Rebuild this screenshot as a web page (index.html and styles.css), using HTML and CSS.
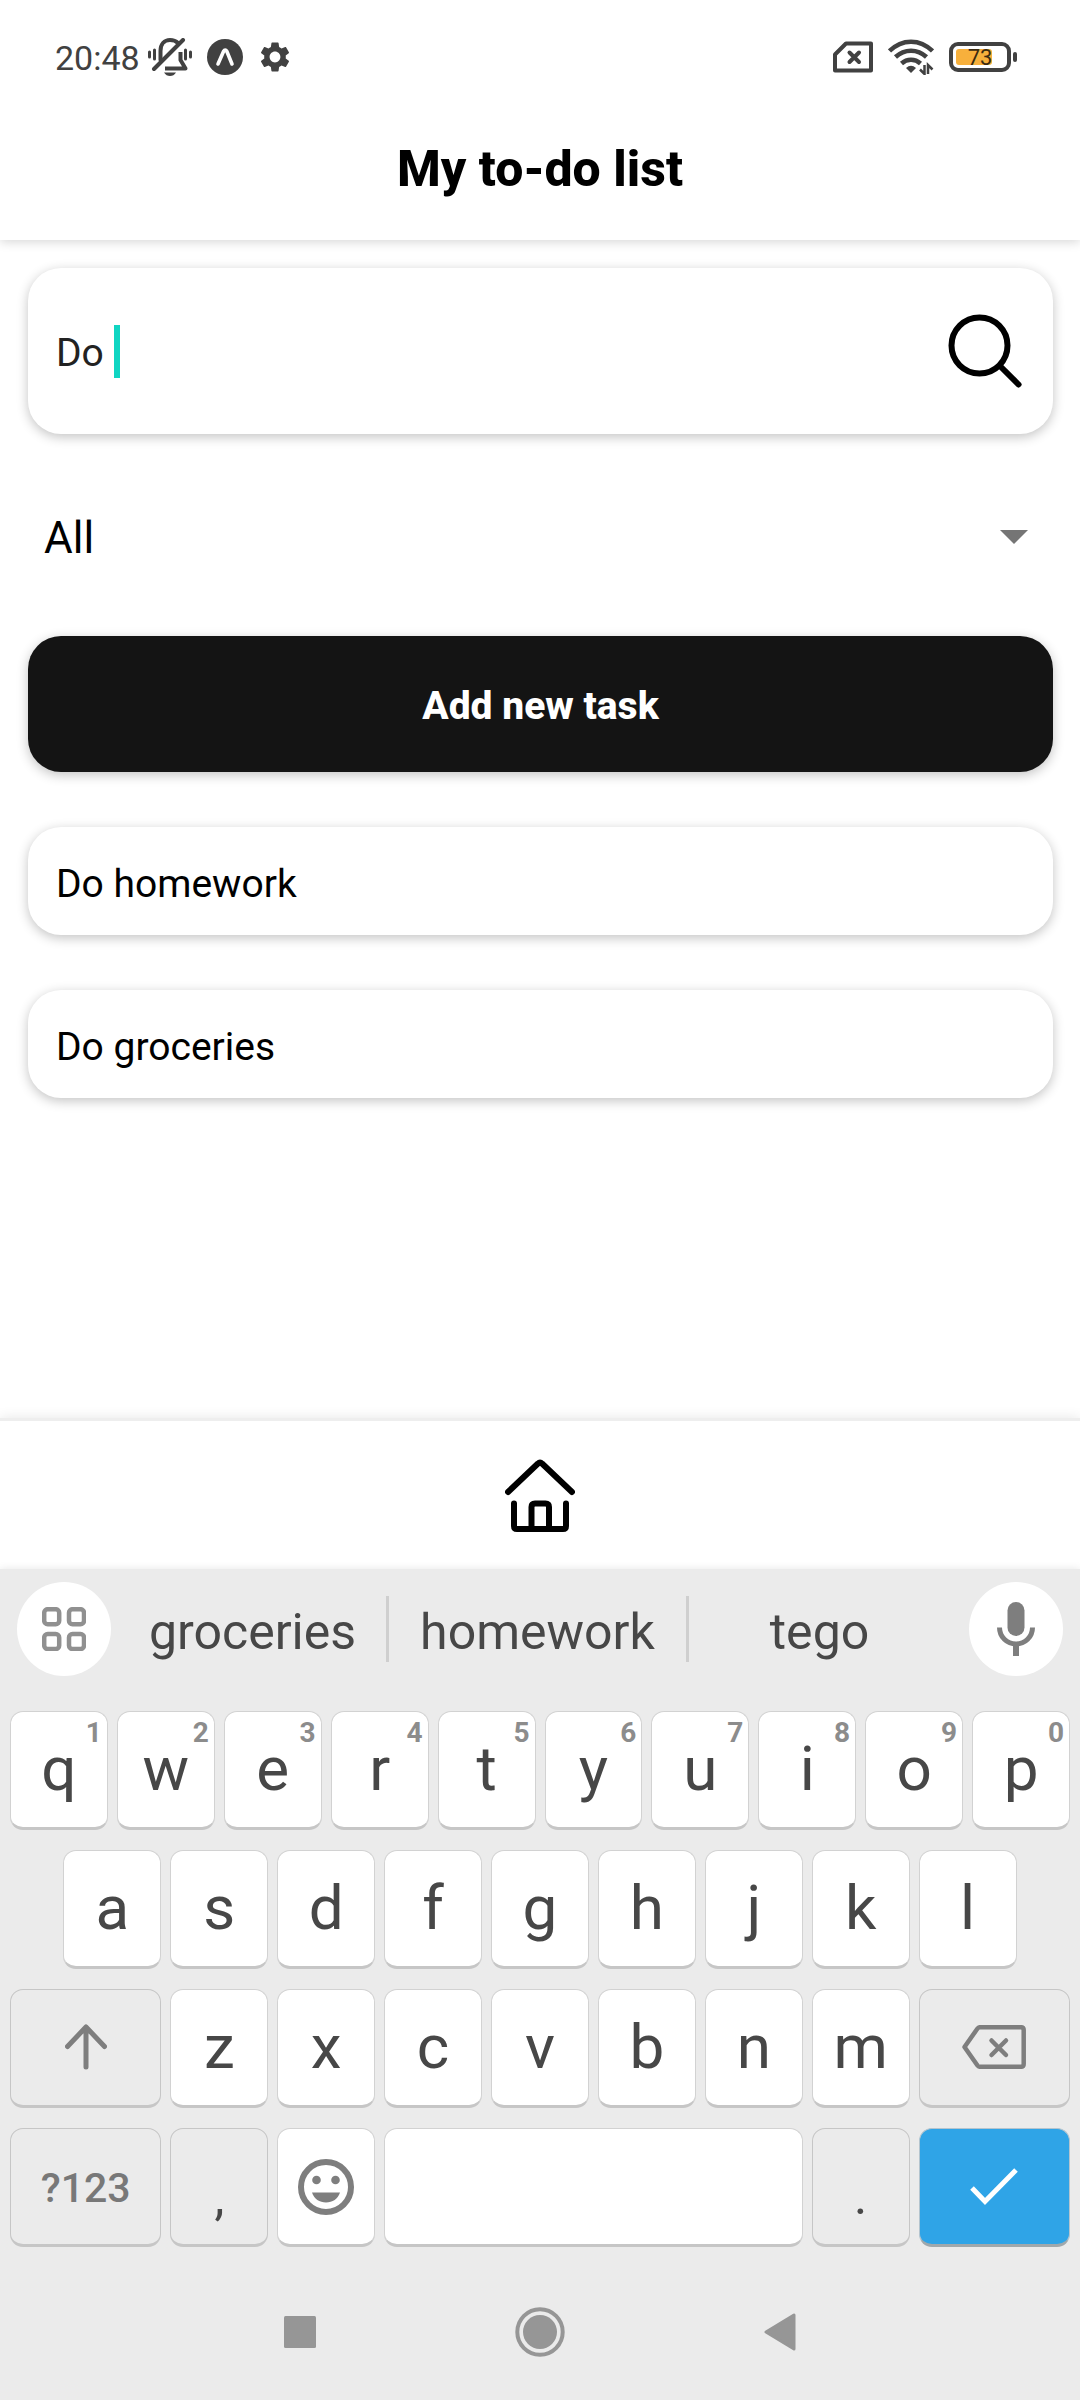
FILE: index.html
```html
<!DOCTYPE html>
<html lang="en">
<head>
<meta charset="utf-8">
<meta name="viewport" content="width=device-width, initial-scale=1">
<title>My to-do list</title>
<link rel="stylesheet" href="styles.css">
</head>
<body>
<header class="app-header">
  <div class="status-bar">
    <div class="status-group">
      <span class="clock">20:48</span>
      <svg class="icon-bell" width="44" height="38" viewBox="0 0 44 38" fill="none" stroke="#414141" stroke-width="4" stroke-linecap="round" aria-hidden="true">
        <path d="M12.500 22V13C12.500 6 16.500 2 22 2C25.500 2 28 3 30 5"/>
        <path d="M6 31L35 2"/>
        <path d="M17 30.500H37.500L32.500 22V14" stroke-linejoin="round" stroke-linecap="butt"/>
        <path d="M16 34.500H28C26.500 37 24.500 38 22 38S17.500 37 16 34.500Z" fill="#414141" stroke="none"/>
        <path d="M1.500 14V19M6.500 12V21M37.500 12V21M42.500 14V19" stroke-width="3"/>
      </svg>
      <svg class="icon-expo" width="36" height="36" viewBox="0 0 36 36" aria-hidden="true">
        <circle cx="18" cy="18" r="18" fill="#414141"/>
        <path d="M11 25L16.500 12.500Q18.200 9.500 19.900 12.500L25 25" fill="none" stroke="#fff" stroke-width="3.600" stroke-linecap="round" stroke-linejoin="round"/>
      </svg>
      <svg class="icon-gear" width="36" height="36" viewBox="0 0 24 24" fill="#414141" aria-hidden="true">
        <path d="M19.140 12.940c.04-.3.06-.61.06-.94 0-.32-.02-.64-.07-.94l2.030-1.580c.18-.14.23-.41.12-.61l-1.920-3.320c-.12-.22-.37-.29-.59-.22l-2.390.96c-.5-.38-1.030-.7-1.620-.94l-.36-2.540c-.04-.24-.24-.41-.48-.41h-3.840c-.24 0-.43.17-.47.41l-.36 2.540c-.59.24-1.130.57-1.620.94l-2.390-.96c-.22-.08-.47 0-.59.22L2.740 8.870c-.12.21-.08.47.12.61l2.030 1.580c-.05.3-.09.63-.09.94s.02.64.07.94l-2.030 1.580c-.18.14-.23.41-.12.61l1.920 3.320c.12.22.37.29.59.22l2.390-.96c.5.38 1.030.7 1.620.94l.36 2.540c.05.24.24.41.48.41h3.840c.24 0 .44-.17.47-.41l.36-2.540c.59-.24 1.130-.56 1.620-.94l2.390.96c.22.08.47 0 .59-.22l1.920-3.320c.12-.22.07-.47-.12-.61l-2.010-1.580zM12 15.600c-1.980 0-3.600-1.620-3.600-3.600s1.620-3.600 3.600-3.600 3.600 1.620 3.600 3.600-1.620 3.600-3.600 3.600z"/>
      </svg>
    </div>
    <div class="status-group">
      <svg width="40" height="32" viewBox="0 0 40 32" fill="none" stroke="#414141" stroke-width="4" stroke-linejoin="round" stroke-linecap="round" aria-hidden="true">
        <path d="M13 2.500H38V29.500H2V13.500Z"/>
        <path d="M16.500 11.500L26 21M26 11.500L16.500 21"/>
      </svg>
      <svg class="icon-wifi" width="46" height="36" viewBox="0 0 46 36" fill="none" stroke="#414141" stroke-width="4.500" aria-hidden="true">
        <path d="M1.500 12C14 -.5 32 -.5 44.500 12"/>
        <path d="M7.500 18C16.500 9.500 29.500 9.500 38.500 18"/>
        <path d="M13.500 24.500C19 19.500 27 19.500 32.500 24.500"/>
        <path d="M23 34L18 29Q23 24.500 28 29Z" fill="#414141" stroke="none"/>
        <path d="M36.500 26V35L32 30.500M40 35V26L44.500 30.500" stroke-width="2.500"/>
      </svg>
      <div class="battery">
        <div class="battery-body"><div class="battery-fill"></div><span class="battery-text">73</span></div>
        <div class="battery-tip"></div>
      </div>
    </div>
  </div>
  <h1 class="title">My to-do list</h1>
</header>

<main class="content">
  <div class="search">
    <label class="search-field">
      <input class="search-input" type="text" value="Do " aria-label="Search tasks">
      <span class="caret"></span>
    </label>
    <button class="search-button" type="button" aria-label="Search">
      <svg width="74" height="74" viewBox="0 0 74 74" fill="none" stroke="#000" stroke-width="6" stroke-linecap="round" aria-hidden="true">
        <circle cx="31.500" cy="31.500" r="28"/>
        <path d="M52 52L70.500 70.500"/>
      </svg>
    </button>
  </div>
  <div class="filter">
    <select class="filter-select" aria-label="Filter tasks">
      <option>All</option>
    </select>
    <svg class="filter-arrow" width="28" height="14" viewBox="0 0 28 14" aria-hidden="true"><path d="M0 0H28L14 14Z" fill="#757575"/></svg>
  </div>
  <button class="add-button" type="button">Add new task</button>
  <ul class="tasks">
    <li class="task">Do homework</li>
    <li class="task">Do groceries</li>
  </ul>
</main>

<nav class="tab-bar">
  <a class="tab" href="#" aria-label="Home">
    <svg width="70" height="73" viewBox="0 0 70 73" fill="none" stroke="#000" stroke-width="6" stroke-linecap="round" stroke-linejoin="round" aria-hidden="true">
      <path d="M3 33L33 4.500Q35 2.500 37 4.500L67 33"/>
      <path d="M9 44.500V67Q9 70 12 70H58Q61 70 61 67V44.500"/>
      <path d="M26.500 70V48Q26.500 44.500 30 44.500H40.500Q44 44.500 44 48V70"/>
    </svg>
  </a>
</nav>

<section class="keyboard" aria-label="Keyboard">
  <div class="suggestions">
    <button class="round" type="button" aria-label="Keyboard tools">
      <svg width="44" height="44" viewBox="0 0 44 44" fill="none" stroke="#909090" stroke-width="4.500" aria-hidden="true">
        <rect x="2.200" y="2.200" width="15" height="15" rx="3.500"/><rect x="27" y="2.200" width="15" height="15" rx="3.500"/>
        <rect x="2.200" y="27" width="15" height="15" rx="3.500"/><rect x="27" y="27" width="15" height="15" rx="3.500"/>
      </svg>
    </button>
    <div class="words">
      <button class="word" type="button">groceries</button>
      <button class="word" type="button">homework</button>
      <button class="word" type="button">tego</button>
    </div>
    <button class="round" type="button" aria-label="Voice input">
      <svg width="38" height="54" viewBox="0 0 38 54" fill="none" stroke="#7e7e7e" aria-hidden="true">
        <rect x="10.500" y="0" width="17" height="34" rx="8.500" fill="#7e7e7e" stroke="none"/>
        <path d="M2.500 25.500C2.500 35 10 42 19 42S35.500 35 35.500 25.500" stroke-width="5"/>
        <path d="M19 42V54" stroke-width="6"/>
      </svg>
    </button>
  </div>
  <div class="keys">
    <button class="key" type="button">q<span class="hint">1</span></button>
    <button class="key" type="button">w<span class="hint">2</span></button>
    <button class="key" type="button">e<span class="hint">3</span></button>
    <button class="key" type="button">r<span class="hint">4</span></button>
    <button class="key" type="button">t<span class="hint">5</span></button>
    <button class="key" type="button">y<span class="hint">6</span></button>
    <button class="key" type="button">u<span class="hint">7</span></button>
    <button class="key" type="button">i<span class="hint">8</span></button>
    <button class="key" type="button">o<span class="hint">9</span></button>
    <button class="key" type="button">p<span class="hint">0</span></button>

    <button class="key key-indent" type="button">a</button>
    <button class="key" type="button">s</button>
    <button class="key" type="button">d</button>
    <button class="key" type="button">f</button>
    <button class="key" type="button">g</button>
    <button class="key" type="button">h</button>
    <button class="key" type="button">j</button>
    <button class="key" type="button">k</button>
    <button class="key" type="button">l</button>

    <button class="key key-wide key-gray" type="button" aria-label="Shift">
      <svg width="42" height="46" viewBox="0 0 42 46" fill="none" stroke="#7e7e7e" stroke-width="5" stroke-linecap="round" stroke-linejoin="round" aria-hidden="true"><path d="M21 43V3M2.500 22.500L21 3L39.500 22.500"/></svg>
    </button>
    <button class="key" type="button">z</button>
    <button class="key" type="button">x</button>
    <button class="key" type="button">c</button>
    <button class="key" type="button">v</button>
    <button class="key" type="button">b</button>
    <button class="key" type="button">n</button>
    <button class="key" type="button">m</button>
    <button class="key key-wide key-gray" type="button" aria-label="Backspace">
      <svg width="64" height="44" viewBox="0 0 64 44" fill="none" stroke="#7e7e7e" stroke-width="4.500" stroke-linecap="round" stroke-linejoin="round" aria-hidden="true"><path d="M18 2.200H59Q61.700 2.200 61.700 5V39Q61.700 41.800 59 41.800H18Q16.500 41.800 15.500 40.500L2.500 22L15.500 3.500Q16.500 2.200 18 2.200Z"/><path d="M29.500 15.500L44 30M44 15.500L29.500 30"/></svg>
    </button>

    <button class="key key-wide key-gray key-symbols" type="button">?123</button>
    <button class="key key-gray key-point" type="button">,</button>
    <button class="key key-emoji" type="button" aria-label="Emoji">
      <svg width="56" height="56" viewBox="0 0 56 56" aria-hidden="true"><circle cx="28" cy="28" r="25" fill="none" stroke="#7e7e7e" stroke-width="6"/><g fill="#7e7e7e"><circle cx="18.500" cy="21" r="4.300"/><circle cx="37.500" cy="21" r="4.300"/><path d="M14 33.500H42C40 40 34.500 43.500 28 43.500S16 40 14 33.500Z"/></g></svg>
    </button>
    <button class="key key-space" type="button" aria-label="Space"></button>
    <button class="key key-gray key-point" type="button">.</button>
    <button class="key key-wide key-enter" type="button" aria-label="Done">
      <svg width="48" height="38" viewBox="0 0 48 38" fill="none" stroke="#fff" stroke-width="5" aria-hidden="true"><path d="M2 20L15 33.500L46 2"/></svg>
    </button>
  </div>
</section>

<nav class="system-nav">
  <button class="system-button" type="button" aria-label="Recent apps"><svg width="34" height="34" viewBox="0 0 34 34" aria-hidden="true"><rect x="1" y="1" width="32" height="32" rx="1.500" fill="#969696"/></svg></button>
  <button class="system-button" type="button" aria-label="Home screen"><svg width="50" height="50" viewBox="0 0 50 50" aria-hidden="true"><circle cx="25" cy="25" r="22.700" fill="none" stroke="#969696" stroke-width="4"/><circle cx="25" cy="25" r="17" fill="#969696"/></svg></button>
  <button class="system-button" type="button" aria-label="Back"><svg width="32" height="38" viewBox="0 0 32 38" aria-hidden="true"><path d="M30 2V36L2 19Z" fill="#969696" stroke="#969696" stroke-width="3" stroke-linejoin="round"/></svg></button>
</nav>
</body>
</html>
```
FILE: styles.css
```css
* {
  box-sizing: border-box;
}

body {
  margin: 0;
  min-height: 100vh;
  display: flex;
  flex-direction: column;
  background: #fff;
  color: #000;
  font-family: Roboto, "Liberation Sans", sans-serif;
}

button,
input,
select {
  margin: 0;
  padding: 0;
  border: 0;
  background: none;
  color: inherit;
  font: inherit;
}

svg {
  display: block;
  flex: none;
}

/* Header */
.app-header {
  background: #fff;
  box-shadow: 0 2px 10px rgba(0, 0, 0, 0.16);
  padding-bottom: 41px;
}

.status-bar {
  display: flex;
  justify-content: space-between;
  height: 114px;
  padding: 0 63px 0 55px;
}

.status-group {
  display: flex;
  align-items: center;
  color: #414141;
}

.clock {
  padding-top: 2px;
  font-size: 34px;
  line-height: 40px;
  margin-right: 8px;
}

.icon-expo {
  margin: 0 14px 0 15px;
}

.icon-wifi {
  margin: 0 15px;
}

.battery {
  display: flex;
  align-items: center;
  gap: 2px;
}

.battery-body {
  position: relative;
  width: 62px;
  height: 30px;
  padding: 3px;
  border: 4px solid #414141;
  border-radius: 9px;
}

.battery-fill {
  width: 36px;
  height: 16px;
  border-radius: 3px;
  background: #f7b03c;
}

.battery-text {
  position: absolute;
  inset: 0;
  font-size: 22px;
  line-height: 24px;
  text-align: center;
  color: #3b2a10;
}

.battery-tip {
  width: 4px;
  height: 10px;
  border-radius: 2px;
  background: #414141;
}

.title {
  margin: 0;
  padding-top: 25px;
  font-size: 50px;
  line-height: 60px;
  font-weight: 800;
  text-align: center;
}

/* Task list */
.content {
  flex: 1;
  display: flex;
  flex-direction: column;
  padding: 28px 27px 0 28px;
}

.search,
.add-button,
.task {
  border-radius: 33px;
  box-shadow: 0 3px 12px rgba(0, 0, 0, 0.24);
}

.search {
  display: flex;
  align-items: center;
  height: 166px;
  padding: 0 31px 0 28px;
  background: #fff;
}

.search-field {
  flex: 1;
  display: flex;
  align-items: center;
}

.search-input {
  field-sizing: content;
  outline: none;
  padding-top: 4px;
  font-size: 39px;
  line-height: 48px;
  color: #222;
}

.caret {
  width: 6px;
  height: 53px;
  background: #10d5c2;
}

.filter {
  position: relative;
  display: flex;
  align-items: center;
  height: 138px;
  margin: 34px 0 30px;
}

.filter-select {
  flex: 1;
  appearance: none;
  padding: 2px 16px 0;
  font-size: 44px;
  line-height: 56px;
}

.filter-arrow {
  position: absolute;
  right: 25px;
  pointer-events: none;
}

.add-button {
  height: 136px;
  padding-top: 4px;
  background: #141414;
  color: #fff;
  font-size: 39px;
  line-height: 48px;
  font-weight: 800;
}

.tasks {
  display: flex;
  flex-direction: column;
  gap: 55px;
  margin: 55px 0;
  padding: 0;
  list-style: none;
}

.task {
  padding: 33px 28px 27px;
  background: #fff;
  font-size: 39px;
  line-height: 48px;
}

/* Tab bar */
.tab-bar {
  display: flex;
  justify-content: center;
  height: 151px;
  border-top: 3px solid #eee;
  box-shadow: 0 0 12px rgba(0, 0, 0, 0.1);
}

.tab {
  display: flex;
  align-items: center;
}

/* Keyboard */
.keyboard {
  z-index: 1;
  padding-bottom: 17px;
  background: #ebebeb;
  color: #474747;
  box-shadow: 0 0 8px rgba(0, 0, 0, 0.1);
}

.suggestions {
  display: flex;
  align-items: center;
  height: 120px;
  margin-bottom: 22px;
  padding: 0 17px;
}

.round {
  display: flex;
  align-items: center;
  justify-content: center;
  width: 94px;
  height: 94px;
  border-radius: 50%;
  background: #fff;
}

.words {
  flex: 1;
  display: grid;
  grid-template-columns: 267fr 300fr 264fr;
  padding: 0 19px 0 8px;
}

.word {
  height: 66px;
  padding-top: 6px;
  font-size: 50px;
  line-height: 60px;
}

.word + .word {
  border-left: 3px solid #cfcfcf;
}

.keys {
  display: grid;
  grid-template-columns: repeat(20, 1fr);
  grid-auto-rows: 119px;
  gap: 20px 9px;
  padding: 0 10px;
}

.key {
  position: relative;
  grid-column: span 2;
  display: flex;
  align-items: center;
  justify-content: center;
  border: 1px solid #d2d2d2;
  border-bottom: 3px solid #c6c6c6;
  border-radius: 13px;
  background: #fff;
  padding-bottom: 2px;
  font-size: 62px;
  line-height: 72px;
}

.key-indent {
  grid-column: 2 / span 2;
}

.key-wide {
  grid-column: span 3;
}

.key-space {
  grid-column: span 8;
}

.key-gray {
  border-color: #c6c6c6;
  background: #ebebeb;
}

.key-symbols {
  padding: 2px 0 0;
  color: #787878;
  font-size: 41px;
  font-weight: 500;
}

.key-point {
  padding: 20px 0 0;
  font-size: 50px;
}

.key-emoji,
.key-enter {
  padding: 0;
}

.key-enter {
  border-color: #b4c4ce;
  border-bottom-color: #a0a8ac;
  background: #2fa4e7;
}

.hint {
  position: absolute;
  top: 5px;
  right: 5px;
  color: #8c8c8c;
  font-size: 28px;
  line-height: 32px;
  font-weight: 700;
}

/* System navigation */
.system-nav {
  z-index: 2;
  display: flex;
  justify-content: center;
  gap: 190px;
  height: 136px;
  background: #ebebeb;
}

.system-button {
  display: flex;
  align-items: center;
  justify-content: center;
  width: 50px;
}
```
